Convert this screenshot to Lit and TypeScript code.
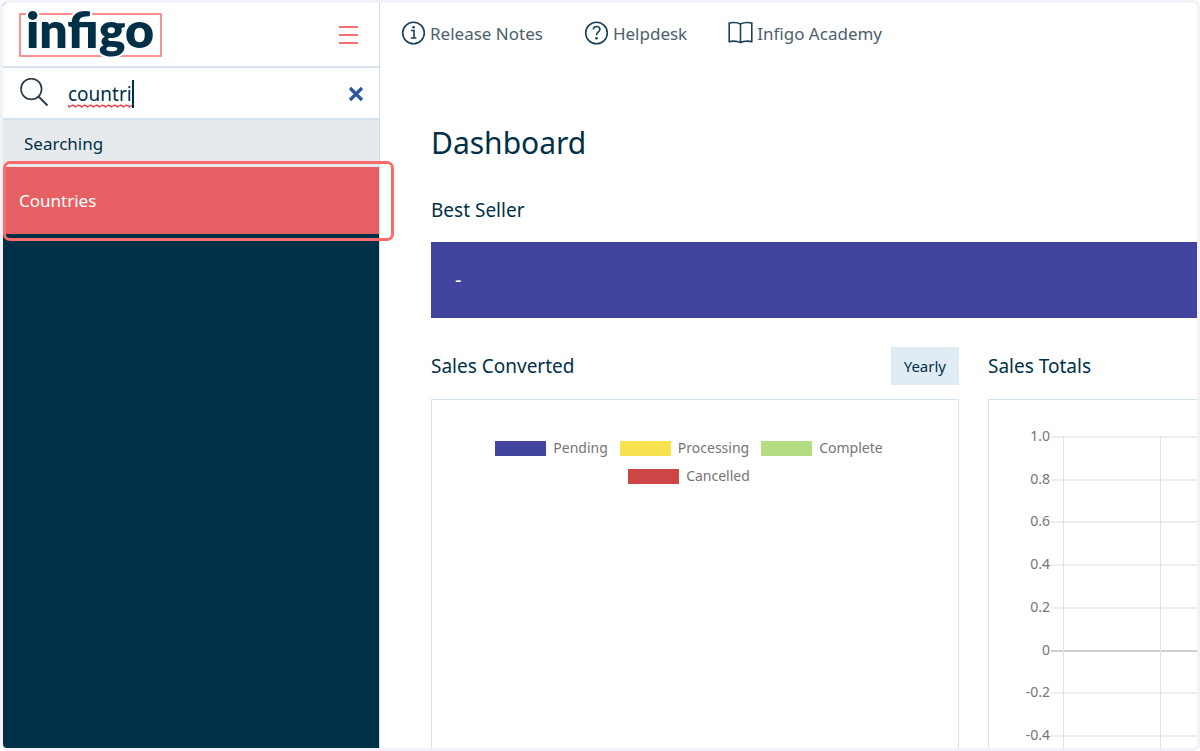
import { LitElement, html, svg, css } from "lit";
import { customElement, state } from "lit/decorators.js";

const LEGEND = [
  { label: "Pending", color: "#4343a0" },
  { label: "Processing", color: "#f9e24f" },
  { label: "Complete", color: "#b4dc82" },
  { label: "Cancelled", color: "#cd4545" },
];

const TICKS = ["1.0", "0.8", "0.6", "0.4", "0.2", "0", "-0.2", "-0.4"];
const TICK_STEP = 42.7;
const COLUMN_STEP = 97;

@customElement("sales-totals-chart")
class SalesTotalsChart extends LitElement {
  static styles = css`
    :host {
      display: block;
    }
    .plot {
      display: block;
      width: 100%;
      height: 520px;
    }
    .tick {
      font: 14px "Noto Sans", sans-serif;
      fill: #757575;
      text-anchor: end;
    }
    .row {
      stroke: #ededed;
      stroke-width: 2;
    }
    .zero {
      stroke: #cfcfcf;
    }
    .column {
      stroke: #e3e3e3;
      stroke-width: 1;
    }
  `;

  render() {
    return html`
      <svg class="plot" role="img" aria-label="Sales totals">
        ${TICKS.map((label, i) => {
          const y = 37 + Math.round(i * TICK_STEP);
          return svg`
            <line class="row ${label === "0" ? "zero" : ""}" x1="62" x2="100%" y1=${y} y2=${y} />
            <text class="tick" x="61" y=${y + 4}>${label}</text>`;
        })}
        ${[0, 1, 2, 3, 4].map((i) => {
          const x = 74.5 + i * COLUMN_STEP;
          return svg`<line class="column" x1=${x} x2=${x} y1="36" y2="464" />`;
        })}
      </svg>
    `;
  }
}

@customElement("side-bar")
class SideBar extends LitElement {
  @state() private query = "countri";

  static styles = css`
    :host {
      display: flex;
      flex-direction: column;
      background: #003047;
      border-right: 1px solid #cfe0ea;
      color: #003047;
    }
    button {
      border: 0;
      padding: 0;
      background: none;
      cursor: pointer;
    }
    svg {
      display: block;
    }
    .brand {
      display: flex;
      align-items: center;
      justify-content: space-between;
      height: 63px;
      padding: 0 20px 0 16px;
      background: #fff;
      border-bottom: 2px solid #d8e5ee;
    }
    .logo {
      overflow: visible;
    }
    .wordmark {
      font: 800 50px Lato, sans-serif;
      fill: #003047;
      stroke: #fff;
      stroke-width: 4;
      paint-order: stroke;
    }
    .search {
      display: flex;
      align-items: center;
      height: 48px;
      padding: 2px 15px 0 16px;
      background: #fff;
      border-bottom: 2px solid #d3e2ec;
    }
    .field {
      flex: 1;
      padding-left: 19px;
    }
    .entry {
      position: relative;
      display: inline-block;
      vertical-align: top;
      padding-right: 2px;
    }
    .entry input {
      display: block;
      field-sizing: content;
      border: 0;
      outline: 0;
      padding: 0;
      background: none;
      font: 19px/28px "Noto Sans", sans-serif;
      color: #003047;
    }
    .caret {
      position: absolute;
      right: 0;
      top: 0;
      width: 2px;
      height: 28px;
      background: #003047;
    }
    .squiggle {
      position: absolute;
      left: 0;
      bottom: 0;
      width: 100%;
      height: 4px;
    }
    .group {
      margin: 0;
      padding: 0 21px;
      background: #e6eaec;
      font-size: 17px;
      font-weight: 400;
      line-height: 47px;
    }
    .result {
      position: relative;
      display: block;
      padding: 0 16px;
      background: #e66063;
      color: #fff;
      font-size: 17px;
      line-height: 67px;
      text-decoration: none;
    }
    .result::after {
      content: "";
      position: absolute;
      inset: -6px -15px -7px 0;
      border: 3px solid #fd6b6d;
      border-radius: 7px;
    }
  `;

  render() {
    return html`
      <div class="brand">
        <svg class="logo" width="146" height="63" viewBox="0 0 146 63" role="img" aria-label="infigo">
          <rect x="1" y="11" width="141" height="42" fill="none" stroke="#fd6b6b" stroke-width="1.5" />
          <text class="wordmark" x="7" y="45">infigo</text>
        </svg>
        <button aria-label="Toggle menu">
          <svg width="20" height="18" viewBox="0 0 20 18" stroke="#fd6b6b" stroke-width="2">
            <path d="M0 1h19M0 9h19M0 17h19" />
          </svg>
        </button>
      </div>
      <div class="search">
        <svg width="30" height="32" viewBox="0 1 30 32" fill="none" stroke="#2b3f4d" stroke-width="1.7">
          <circle cx="12.300" cy="12" r="10.300" />
          <path d="M19.500 19.500l9 9" stroke-width="2" />
        </svg>
        <div class="field">
          <div class="entry">
            <input
              type="text"
              size="6"
              aria-label="Search menu"
              spellcheck="false"
              .value=${this.query}
              @input=${(e: Event) => (this.query = (e.target as HTMLInputElement).value)}
            />
            <svg class="squiggle" aria-hidden="true">
              <defs>
                <pattern id="wave" width="6" height="4" patternUnits="userSpaceOnUse">
                  <path d="M-1 .5L1.5 3L4.5 1L7.5 3" fill="none" stroke="#f5333f" stroke-width="1.3" />
                </pattern>
              </defs>
              <rect width="100%" height="4" fill="url(#wave)" />
            </svg>
            <span class="caret"></span>
          </div>
        </div>
        <button aria-label="Clear search" @click=${() => (this.query = "")}>
          <svg width="16" height="16" viewBox="0 0 16 16" stroke="#2d55a0" stroke-width="3.2">
            <path d="M2 2l12 12M14 2L2 14" />
          </svg>
        </button>
      </div>
      <h2 class="group">Searching</h2>
      <a class="result" href="#countries">Countries</a>
    `;
  }
}

@customElement("app-root")
class AppRoot extends LitElement {
  static styles = css`
    :host {
      display: block;
      font-family: "Noto Sans", sans-serif;
      color: #003047;
    }
    .frame {
      display: grid;
      grid-template-columns: 377px minmax(0, 1fr);
      height: 100vh;
      box-sizing: border-box;
      border: 3px solid #f3f2f8;
      border-radius: 7px;
      background: #fff;
      overflow: hidden;
    }
    side-bar {
      z-index: 1;
    }
    .main {
      overflow: hidden;
    }
    .links {
      display: flex;
      align-items: center;
      gap: 41px;
      height: 60px;
      padding-left: 21px;
    }
    .links a {
      display: flex;
      align-items: center;
      gap: 4px;
      color: #4b606d;
      font-size: 17px;
      text-decoration: none;
    }
    .links svg {
      display: block;
      fill: none;
      stroke: #1b4258;
      stroke-width: 1.6;
    }
    .dashboard {
      padding: 61px 0 0 51px;
    }
    h1,
    h2 {
      margin: 0;
      font-weight: 400;
    }
    h1 {
      font-size: 30px;
      line-height: 38px;
    }
    h2 {
      font-size: 19px;
      line-height: 38px;
    }
    .best {
      margin-top: 29px;
    }
    .banner {
      margin: 13px 0 29px;
      padding-left: 24px;
      background: #4343a0;
      color: #fff;
      font-size: 20px;
      line-height: 76px;
    }
    .panels {
      display: grid;
      grid-template-columns: repeat(2, minmax(528px, 1fr));
      gap: 29px;
    }
    .heading {
      display: flex;
      justify-content: space-between;
      margin-bottom: 14px;
    }
    .heading button {
      border: 0;
      padding: 0 13px;
      background: #e0ecf4;
      color: #003047;
      font: 15px/38px "Noto Sans", sans-serif;
    }
    .card {
      border: 1px solid #d3e3ed;
      min-height: 520px;
    }
    .legend {
      display: flex;
      flex-wrap: wrap;
      justify-content: center;
      margin: 0;
      padding: 34px 60px;
      list-style: none;
      color: #757575;
      font-size: 14px;
      line-height: 28px;
    }
    .legend li {
      display: flex;
      align-items: center;
      gap: 7px;
      margin-right: 12px;
    }
    .swatch {
      width: 51px;
      height: 15px;
    }
  `;

  render() {
    return html`
      <div class="frame">
        <side-bar></side-bar>
        <main class="main">
          <nav class="links">
            <a href="#release-notes">
              <svg width="25" height="24" viewBox="0 0 25 24">
                <circle cx="12.5" cy="12" r="10.8" />
                <path d="M10 9.5h3v7M9.8 17h5.6" />
                <circle cx="12.6" cy="6.3" r="1.3" fill="#1b4258" stroke="none" />
              </svg>
              Release Notes
            </a>
            <a href="#helpdesk">
              <svg width="25" height="24" viewBox="0 0 25 24">
                <circle cx="12.5" cy="12" r="10.8" />
                <path d="M9.3 8.6c0-4.2 6.6-4 6.6-.3 0 2.7-3.4 2.6-3.4 5.9" />
                <circle cx="12.5" cy="17.2" r="1.3" fill="#1b4258" stroke="none" />
              </svg>
              Helpdesk
            </a>
            <a href="#academy">
              <svg width="25" height="24" viewBox="0 0 25 24">
                <path
                  d="M12.5 3C9 1.300 5 1.300 1.200 2v18.600c3.800-.7 7.800-.7 11.300 1 3.500-1.700 7.500-1.700 11.300-1V2C20 1.300 16 1.300 12.500 3zM12.500 3v18.600"
                />
              </svg>
              Infigo Academy
            </a>
          </nav>
          <div class="dashboard">
            <h1>Dashboard</h1>
            <section class="best">
              <h2>Best Seller</h2>
              <div class="banner">-</div>
            </section>
            <div class="panels">
              <section>
                <div class="heading">
                  <h2>Sales Converted</h2>
                  <button>Yearly</button>
                </div>
                <div class="card">
                  <ul class="legend">
                    ${LEGEND.map(
                      (item) => html`<li>
                        <span class="swatch" style="background:${item.color}"></span>${item.label}
                      </li>`
                    )}
                  </ul>
                </div>
              </section>
              <section>
                <div class="heading"><h2>Sales Totals</h2></div>
                <div class="card"><sales-totals-chart></sales-totals-chart></div>
              </section>
            </div>
          </div>
        </main>
      </div>
    `;
  }
}
